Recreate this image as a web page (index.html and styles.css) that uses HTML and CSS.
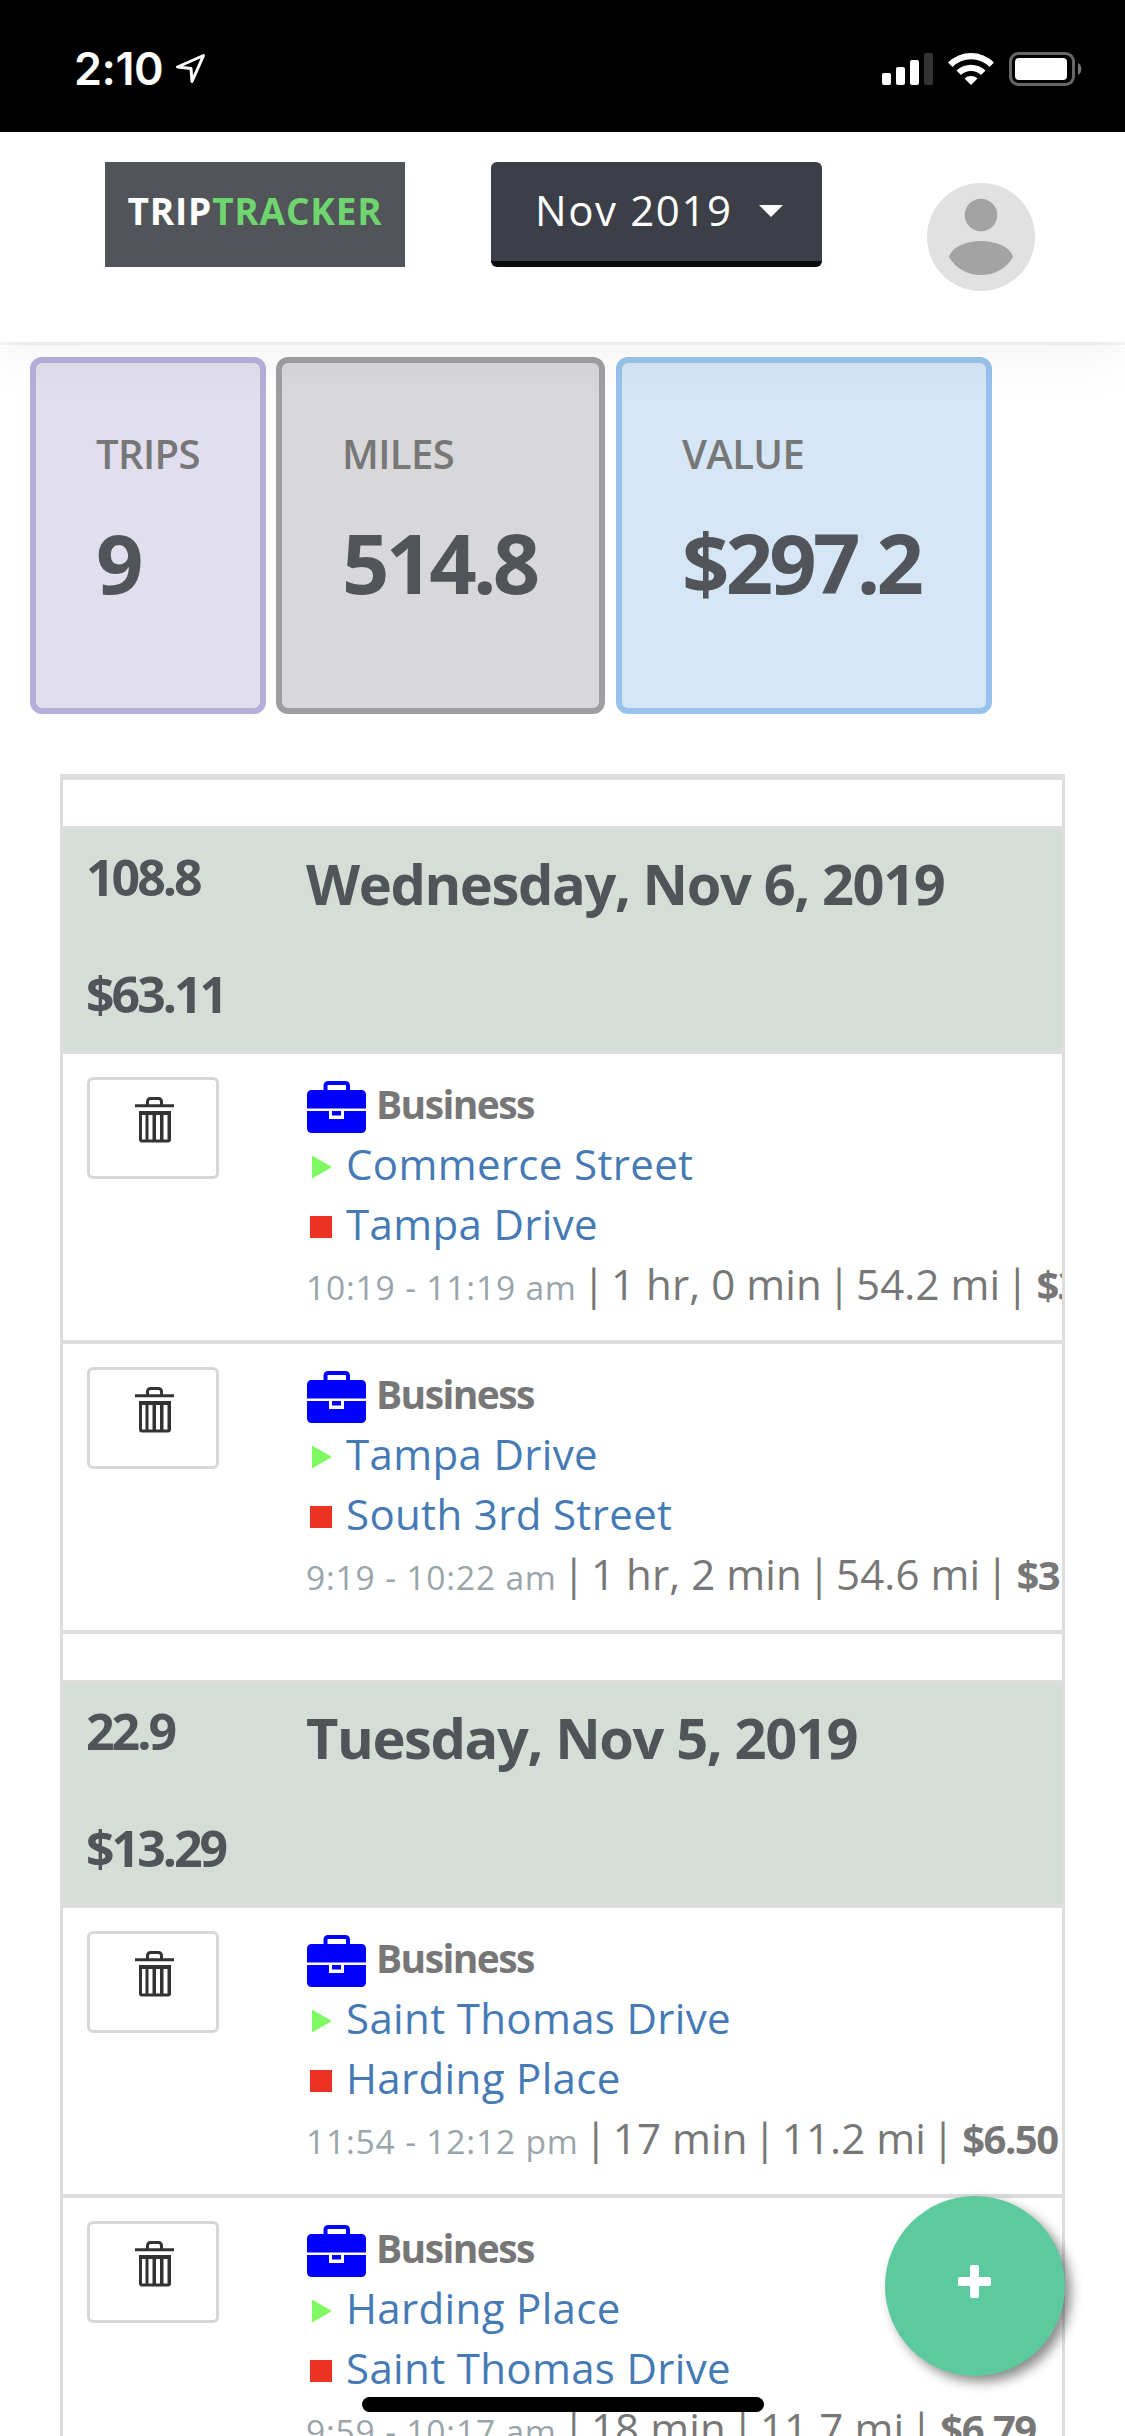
FILE: index.html
```html
<!DOCTYPE html>
<html lang="en">
<head>
    <meta charset="UTF-8">
    <meta name="viewport" content="width=device-width, initial-scale=1.0">
    <title>TripTracker</title>
    <link rel="stylesheet" href="styles.css">
</head>
<body>
    <!-- shared icons -->
    <svg class="icon-defs" width="0" height="0">
        <symbol id="trash" viewBox="0 0 39 46">
            <path d="M0 7.2h39v3H0z"/>
            <path d="M12.5 8V4.5a3 3 0 0 1 3-3h8a3 3 0 0 1 3 3V8" fill="none" stroke="currentColor" stroke-width="3"/>
            <path fill-rule="evenodd" d="M4 14h32v28.500a3 3 0 0 1-3 3H7a3 3 0 0 1-3-3zM7 18v24.500h3.500V18zM13.500 18v24.500h4V18zM21 18v24.500h4V18zM28.500 18v24.500h4V18z"/>
        </symbol>
        <symbol id="briefcase" viewBox="0 0 59 52">
            <path d="M18.500 10V4.500a2.500 2.500 0 0 1 2.500-2.500h17.500a2.500 2.500 0 0 1 2.500 2.500V10" fill="none" stroke="currentColor" stroke-width="4"/>
            <path d="M0 27.500V13.500a4.500 4.500 0 0 1 4.500-4.500h50a4.500 4.500 0 0 1 4.500 4.500v14z"/>
            <path d="M0 30h22v8h15v-8h22v17.500a4.500 4.500 0 0 1-4.500 4.500h-50a4.500 4.500 0 0 1-4.500-4.500z"/>
            <path d="M25 30h9v4.500h-9z"/>
        </symbol>
    </svg>

    <div class="status-bar">
        <span class="time">2:10</span>
        <svg class="location" width="30" height="30" viewBox="0 0 30 30">
            <path d="M27.500 1.500L1.500 13L15 14.500L16 27.500Z" fill="none" stroke="#fff" stroke-width="3" stroke-linejoin="round"/>
        </svg>
        <svg class="signal" width="200" height="34" viewBox="0 0 200 34">
            <g fill="#fff">
                <rect x="0" y="21" width="9" height="12" rx="2"/>
                <rect x="14" y="15" width="9" height="18" rx="2"/>
                <rect x="28" y="8" width="9" height="25" rx="2"/>
                <rect x="42" y="1" width="9" height="32" rx="2" fill="#333"/>
                <path d="M66 10.500A32.500 32.500 0 0 1 112 10.500L107.500 15A26 26 0 0 0 70.500 15Z"/>
                <path d="M74.500 18.500A21 21 0 0 1 103.500 18.500L99 23A14.500 14.500 0 0 0 79 23Z"/>
                <path d="M82.500 26.500A10 10 0 0 1 95.500 26.500L89 33Z"/>
                <rect x="133" y="6" width="52" height="22" rx="4"/>
            </g>
            <rect x="128.500" y="1.500" width="63" height="31" rx="8" fill="none" stroke="#666" stroke-width="3"/>
            <path d="M196 11a7 7 0 0 1 0 12z" fill="#777"/>
        </svg>
    </div>

    <header class="header">
        <div class="logo">TRIP<span>TRACKER</span></div>
        <button type="button" class="month-btn">Nov 2019<i class="caret"></i></button>
        <svg class="avatar" width="108" height="108" viewBox="0 0 108 108">
            <circle cx="54" cy="54" r="54" fill="#e1e1e1"/>
            <circle cx="54" cy="32" r="16.300" fill="#a3a3a3"/>
            <path d="M22 74C25 63 41 58 54 58s29 5 32 16C79 86 67 92 54 92S29 86 22 74z" fill="#a3a3a3"/>
        </svg>
    </header>

    <div class="totals">
        <div class="card card-trips">
            <div class="card-label">TRIPS</div>
            <div class="card-value">9</div>
        </div>
        <div class="card card-miles">
            <div class="card-label">MILES</div>
            <div class="card-value">514.8</div>
        </div>
        <div class="card card-amount">
            <div class="card-label">VALUE</div>
            <div class="card-value">$297.2</div>
        </div>
    </div>

    <div class="trips">
        <div class="spacer"></div>
        <div class="day">
            <div class="day-totals"><div>108.8</div><div>$63.11</div></div>
            <h2>Wednesday, Nov 6, 2019</h2>
        </div>
        <div class="trip">
            <button type="button" class="delete-btn"><svg><use href="#trash"/></svg></button>
            <div class="trip-info">
                <div class="category"><svg><use href="#briefcase"/></svg>Business</div>
                <div class="place start"><a>Commerce Street</a></div>
                <div class="place stop"><a>Tampa Drive</a></div>
                <div class="details"><small>10:19 - 11:19 am</small> <i>|</i> 1 hr, 0 min <i>|</i> 54.2 mi <i>|</i> <b>$31.44</b></div>
            </div>
        </div>
        <div class="trip">
            <button type="button" class="delete-btn"><svg><use href="#trash"/></svg></button>
            <div class="trip-info">
                <div class="category"><svg><use href="#briefcase"/></svg>Business</div>
                <div class="place start"><a>Tampa Drive</a></div>
                <div class="place stop"><a>South 3rd Street</a></div>
                <div class="details"><small>9:19 - 10:22 am</small> <i>|</i> 1 hr, 2 min <i>|</i> 54.6 mi <i>|</i> <b>$31.67</b></div>
            </div>
        </div>

        <div class="spacer"></div>
        <div class="day">
            <div class="day-totals"><div>22.9</div><div>$13.29</div></div>
            <h2>Tuesday, Nov 5, 2019</h2>
        </div>
        <div class="trip">
            <button type="button" class="delete-btn"><svg><use href="#trash"/></svg></button>
            <div class="trip-info">
                <div class="category"><svg><use href="#briefcase"/></svg>Business</div>
                <div class="place start"><a>Saint Thomas Drive</a></div>
                <div class="place stop"><a>Harding Place</a></div>
                <div class="details"><small>11:54 - 12:12 pm</small> <i>|</i> 17 min <i>|</i> 11.2 mi <i>|</i> <b>$6.50</b></div>
            </div>
        </div>
        <div class="trip">
            <button type="button" class="delete-btn"><svg><use href="#trash"/></svg></button>
            <div class="trip-info">
                <div class="category"><svg><use href="#briefcase"/></svg>Business</div>
                <div class="place start"><a>Harding Place</a></div>
                <div class="place stop"><a>Saint Thomas Drive</a></div>
                <div class="details"><small>9:59 - 10:17 am</small> <i>|</i> 18 min <i>|</i> 11.7 mi <i>|</i> <b>$6.79</b></div>
            </div>
        </div>
    </div>

    <button type="button" class="add-btn">
        <svg width="33" height="33" viewBox="0 0 33 33" fill="#fff">
            <rect x="0" y="12" width="33" height="9" rx="2"/>
            <rect x="12" y="0" width="9" height="33" rx="2"/>
        </svg>
    </button>
    <div class="home-indicator"></div>
</body>
</html>
```

FILE: styles.css
```css
* {
    box-sizing: border-box;
}
html, body {
    height: 2436px;
    overflow: hidden;
}
body {
    margin: 0;
    position: relative;
    background: #fff;
    color: #777;
    font-family: "Open Sans", "Noto Sans", sans-serif;
    font-size: 42px;
    line-height: 60px;
}
button {
    font: inherit;
    padding: 0;
}
.icon-defs {
    position: absolute;
}

/* status bar */
.status-bar {
    height: 132px;
    padding: 0 43px 0 74px;
    background: #000;
    color: #fff;
    display: flex;
    align-items: flex-start;
}
.time {
    margin-top: 39px;
    width: 102px;
    font-family: Inter, sans-serif;
    font-size: 45px;
    font-weight: 600;
    letter-spacing: -0.5px;
}
.location {
    margin-top: 54px;
}
.signal {
    margin: 52px 0 0 auto;
}

/* header */
.header {
    position: relative;
    z-index: 2;
    height: 210px;
    padding: 30px 90px 0 105px;
    display: flex;
    align-items: flex-start;
    box-shadow: 0 3px 0 rgba(0,0,0,0.04), 0 10px 60px rgba(0,0,0,0.06);
}
.logo {
    width: 300px;
    height: 105px;
    background: #515458;
    color: #fff;
    font-size: 37px;
    font-weight: 700;
    line-height: 98px;
    letter-spacing: 0.8px;
    text-align: center;
}
.logo span {
    color: #6fd66f;
}
.month-btn {
    margin-left: 86px;
    width: 331px;
    height: 105px;
    padding: 0 0 4px 44px;
    border: none;
    border-bottom: 6px solid #0b0b0b;
    border-radius: 6px;
    background: #3d3f48;
    color: #fff;
    display: flex;
    align-items: center;
    letter-spacing: 1.6px;
}
.caret {
    margin: 3px 0 0 26px;
    border: 12px solid transparent;
    border-top-color: #fff;
    border-bottom: none;
}
.avatar {
    margin: 21px 0 0 auto;
}

/* month totals */
.totals {
    display: flex;
    padding: 15px 30px 0;
}
.card {
    height: 357px;
    padding: 61px 0 0 60px;
    border: 6px solid;
    border-radius: 12px;
}
.card-trips {
    width: 236px;
    background: #e1deee;
    border-color: #b5b0d8;
}
.card-miles {
    width: 329px;
    margin-left: 10px;
    background: #d8d8da;
    border-color: #9d9fa2;
}
.card-amount {
    width: 376px;
    margin-left: 11px;
    background: #d5e6f6;
    border-color: #98c3ec;
}
.card-label {
    font-size: 40px;
    font-weight: 600;
    letter-spacing: -0.6px;
}
.card-value {
    margin-top: 28px;
    color: #515458;
    font-size: 83px;
    font-weight: 700;
    line-height: 100px;
    letter-spacing: -3.8px;
}

/* trip list */
.trips {
    margin: 60px 60px 0;
    height: 1700px;
    border: 3px solid #ddd;
    border-top-width: 6px;
    overflow: hidden;
}
.spacer {
    height: 50px;
    border-bottom: 4px solid #ddd;
}
.day, .trip {
    display: grid;
    grid-template-columns: 219px 1fr;
    padding-left: 24px;
    border-bottom: 4px solid #ddd;
}
.day {
    height: 224px;
    padding-top: 17px;
    background: #d4ded6;
    color: #515458;
    font-weight: 700;
}
.day-totals {
    margin-left: -1px;
    font-size: 50px;
    letter-spacing: -3px;
}
.day-totals div {
    margin-bottom: 57px;
}
.day h2 {
    margin: 6px 0 0;
    font-size: 56px;
    font-weight: 700;
    letter-spacing: -1.4px;
}
.trip {
    height: 290px;
    padding-top: 20px;
}
.delete-btn {
    display: flex;
    align-items: flex-start;
    margin-top: 3px;
    width: 132px;
    height: 102px;
    padding: 17px 0 0 45px;
    border: 3px solid #d6d6db;
    border-radius: 6px;
    background: #fff;
    color: #333;
}
.delete-btn svg {
    width: 39px;
    height: 46px;
    fill: currentColor;
}
.trip-info {
    white-space: nowrap;
    overflow: hidden;
}
.category {
    display: flex;
    height: 60px;
    font-size: 39px;
    font-weight: 700;
    letter-spacing: -1.6px;
}
.category svg {
    width: 59px;
    height: 52px;
    margin: 7px 10px 0 1px;
    color: #00f;
    fill: currentColor;
}
.place {
    display: flex;
    align-items: center;
    color: #467ab5;
    letter-spacing: 0.35px;
}
.place::before {
    content: "";
    width: 20px;
    height: 23px;
    margin: 6px 14px 0 6px;
    background: #7ffa62;
    clip-path: polygon(0 0, 100% 50%, 0 100%);
}
.place.stop::before {
    width: 22px;
    height: 22px;
    margin-left: 4px;
    background: #ea3323;
    clip-path: none;
}
.details {
    letter-spacing: 0.1px;
}
.details small {
    color: #9aa5aa;
    font-size: 33.6px;
    letter-spacing: 0.8px;
}
.details i {
    font-style: normal;
    margin: 0 -5.5px;
}
.details b {
    font-size: 40px;
    letter-spacing: -1.5px;
    margin-left: 2px;
}

/* floating elements */
.add-btn {
    position: absolute;
    z-index: 3;
    left: 885px;
    top: 2196px;
    width: 180px;
    height: 180px;
    padding: 0 2px 9px 0;
    border: none;
    border-radius: 50%;
    background: #5cc99e;
    box-shadow: 6px 6px 12px rgba(0,0,0,0.45);
    display: flex;
    align-items: center;
    justify-content: center;
}
.home-indicator {
    position: absolute;
    z-index: 3;
    left: 362px;
    top: 2397px;
    width: 402px;
    height: 15px;
    border-radius: 8px;
    background: #000;
}
```
